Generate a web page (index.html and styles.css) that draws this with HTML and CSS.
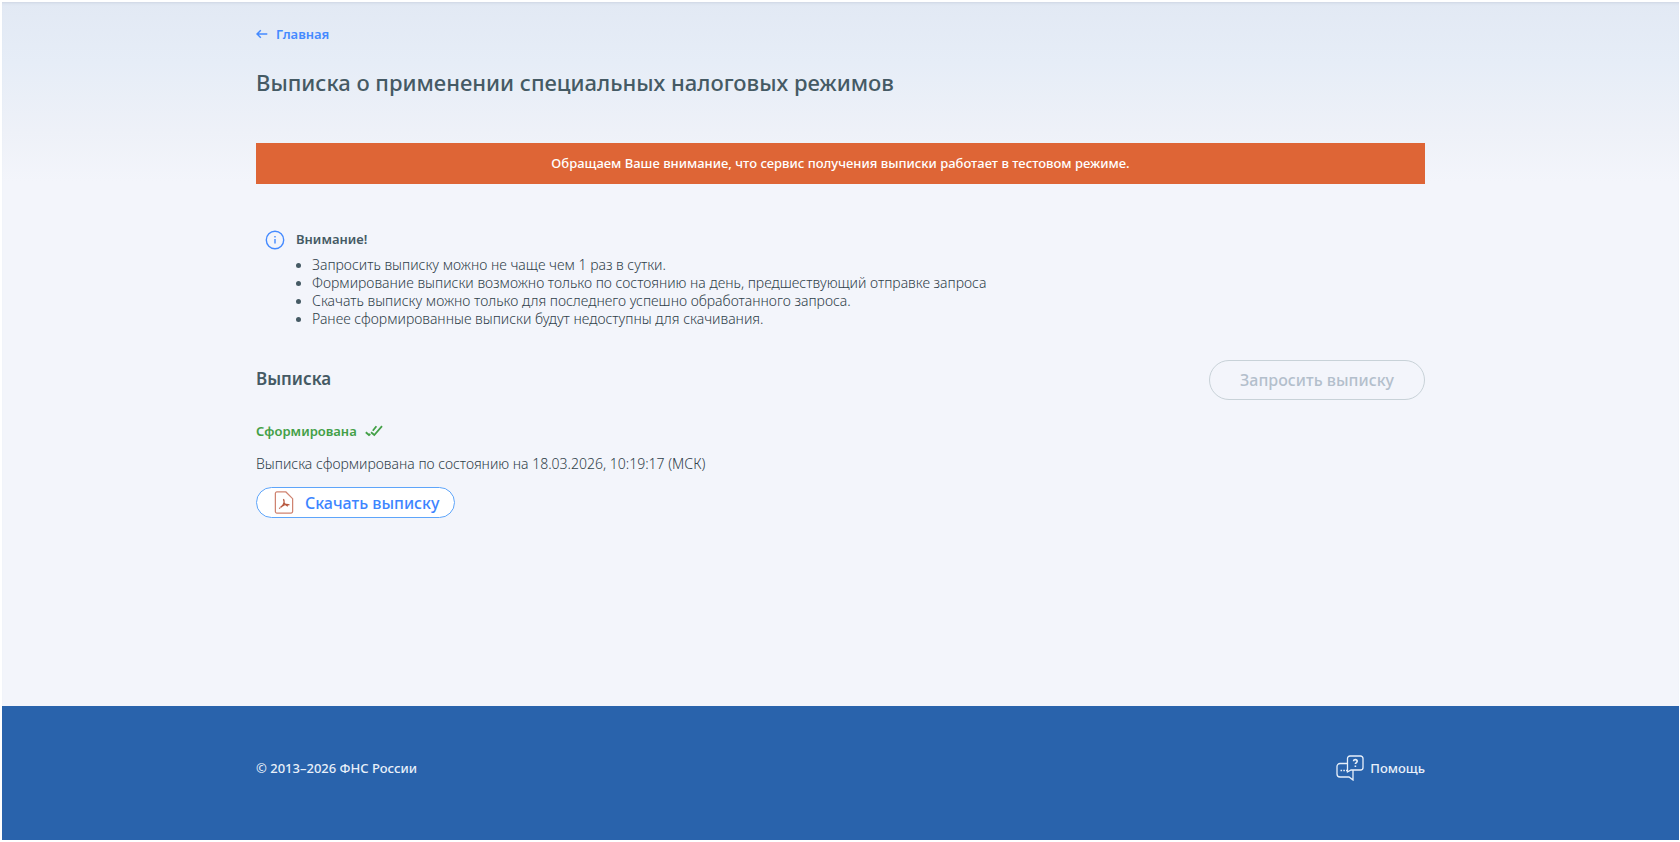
FILE: index.html
```html
<!DOCTYPE html>
<html lang="ru">
<head>
<meta charset="utf-8">
<title>Выписка о применении специальных налоговых режимов</title>
<link rel="stylesheet" href="styles.css">
</head>
<body>
<div class="page">
  <main class="main">
    <div class="container">
      <a class="back" href="#">
        <svg class="back-icon" viewBox="0 0 12 10" aria-hidden="true"><path d="M11.3 5H1M4.8 1.2 1 5l3.8 3.8"/></svg>
        Главная
      </a>
      <h1 class="title">Выписка о применении специальных налоговых режимов</h1>
      <div class="banner">Обращаем Ваше внимание, что сервис получения выписки работает в тестовом режиме.</div>
      <section class="notice">
        <svg class="notice-icon" viewBox="0 0 20 20" aria-hidden="true"><circle cx="10" cy="10" r="8.7"/><path d="M10 9v4.6M10 6v1.4"/></svg>
        <div>
          <h2 class="notice-title">Внимание!</h2>
          <ul class="notice-list">
            <li>Запросить выписку можно не чаще чем 1 раз в сутки.</li>
            <li>Формирование выписки возможно только по состоянию на день, предшествующий отправке запроса</li>
            <li>Скачать выписку можно только для последнего успешно обработанного запроса.</li>
            <li>Ранее сформированные выписки будут недоступны для скачивания.</li>
          </ul>
        </div>
      </section>
      <section>
        <div class="section-head">
          <h2 class="section-title">Выписка</h2>
          <button class="button button-request" type="button" disabled>Запросить выписку</button>
        </div>
        <p class="status">Сформирована
          <svg class="status-icon" viewBox="0 0 18 12" aria-hidden="true"><path d="M.8 7.2 4 10l1.300-1M11.400 1.200 7.800 5.800M6 7.200 9.300 10 17 1.200"/></svg>
        </p>
        <p class="details">Выписка сформирована по состоянию на 18.03.2026, 10:19:17 (МСК)</p>
        <button class="button button-download" type="button">
          <svg class="pdf-icon" viewBox="0 0 20 24" aria-hidden="true"><path class="pdf-sheet" d="M2.500 1H12l7 7v13.500a1.500 1.500 0 0 1-1.500 1.500h-15A1.500 1.500 0 0 1 1 21.500v-19A1.500 1.500 0 0 1 2.500 1Z"/><path d="M9.400 8.500c1 1.500.8 3.500-.2 5.500-.9 1.900-2.200 3.400-4.400 4.300M9.200 14.500c2.200-.7 4.500-.8 6.500-.1M9.600 11.500c.7 1.600 2.200 3.200 4.400 4.400M6.500 16.600c1.200-1 2.500-1.600 4.200-2.200"/></svg>
          Скачать выписку
        </button>
      </section>
    </div>
  </main>
  <footer class="footer">
    <div class="container footer-row">
      <span>© 2013–2026 ФНС России</span>
      <a class="help" href="#">
        <svg class="help-icon" viewBox="0 0 28 26" aria-hidden="true"><path d="M11 8.500H4a3 3 0 0 0-3 3V19a3 3 0 0 0 3 3h9l4 3v-9.500M14 1h10.500A2.500 2.500 0 0 1 27 3.500v9a2.500 2.500 0 0 1-2.500 2.500H15l-3.500 2V3.500A2.500 2.500 0 0 1 14 1Z"/><path class="help-mark" d="M17.600 6.200c0-2.200 3.600-2.100 3.600.1 0 1.300-1.800 1.200-1.800 2.700M19.400 10.500V12M4.500 15.500h1.600M7.300 15.500h1.600M10 15.500h1.600"/></svg>
        Помощь
      </a>
    </div>
  </footer>
</div>
</body>
</html>
```
FILE: styles.css
```css
* { box-sizing: border-box; }
body {
  margin: 0;
  background: #fff;
  color: #455a64;
  font: 500 13px/18px "Noto Sans", "Open Sans", sans-serif;
}
h1, h2, p, ul { margin: 0; }
svg { fill: none; stroke: currentColor; flex: none; }
a { text-decoration: none; }
.page {
  display: flex;
  flex-direction: column;
  min-height: 100vh;
  padding: 2px 1px 2px 2px;
}
.main {
  flex: 1;
  padding: 23px 0 40px;
  background: linear-gradient(#e2e9f4, #e6edf7 60px, #eef1f8 130px, #f3f5fb 180px);
  box-shadow: inset 0 3px 3px -2px #ccd4e2;
}
.container {
  width: 70%;
  max-width: 1169px;
  min-width: 720px;
  margin: 0 auto;
}
.back {
  display: inline-flex;
  align-items: center;
  gap: 8px;
  color: #448aff;
  font-weight: 600;
}
.back-icon { width: 12px; height: 10px; stroke-width: 1.5; }
.title {
  margin-top: 24px;
  font-size: 22px;
  line-height: 30px;
  font-weight: 500;
}
.banner {
  margin-top: 46px;
  padding: 11px;
  background: #de6536;
  color: #fff;
  line-height: 19px;
  text-align: center;
}
.notice {
  display: flex;
  align-items: flex-start;
  gap: 11px;
  margin-top: 46px;
  padding-left: 9px;
}
.notice-icon { width: 20px; height: 20px; color: #448aff; stroke-width: 1.4; }
.notice-title { font-size: 13px; line-height: 18px; font-weight: 600; }
.notice-list {
  margin-top: 8px;
  padding-left: 16px;
}
.notice-list, .details {
  color: #2f4049;
  font-size: 14px;
  font-weight: 350;
}
.notice-list li::marker { color: #455a64; font-size: 13px; }
.section-head {
  display: flex;
  align-items: flex-start;
  justify-content: space-between;
  margin-top: 32px;
}
.section-title { font-size: 17px; line-height: 38px; font-weight: 600; }
.button {
  font: 500 16px/22px "Noto Sans", "Open Sans", sans-serif;
  border: 1px solid;
  border-radius: 20px;
}
.button-request {
  padding: 8px 30px;
  border-color: #c8d2d8;
  background: transparent;
  color: #b3bfcc;
}
.status {
  display: flex;
  align-items: center;
  gap: 8px;
  margin-top: 22px;
  color: #43a047;
  font-weight: 600;
}
.status-icon { width: 18px; height: 12px; stroke-width: 1.8; }
.details { margin-top: 15px; }
.button-download {
  display: flex;
  align-items: center;
  gap: 11px;
  margin-top: 14px;
  padding: 3px 15px 3px 17px;
  border-color: #5ea5fa;
  background: #fff;
  color: #3d85ff;
}
.pdf-icon { width: 20px; height: 23px; color: #b8583f; stroke-width: 1.3; }
.pdf-sheet { stroke: #cf8370; }
.footer { background: #2963ac; color: #e8f0fa; }
.footer-row {
  display: flex;
  align-items: center;
  justify-content: space-between;
  padding: 49px 0 59px;
}
.help { display: flex; align-items: center; gap: 6px; color: inherit; }
.help-icon { width: 28px; height: 26px; stroke-width: 1.3; }
.help-mark { stroke-width: 1.6; }
```
